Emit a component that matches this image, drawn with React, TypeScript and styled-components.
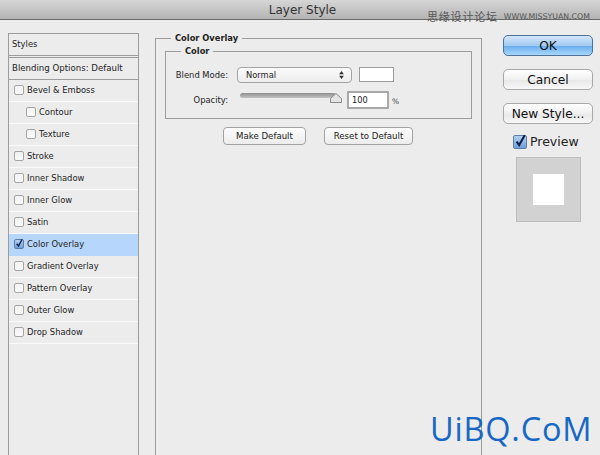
import React from "react"
import styled, { createGlobalStyle } from "styled-components"

const GlobalStyle = createGlobalStyle`
    html, body {
        margin: 0;
        padding: 0;
        background: #ececec;
    }
    * {
        box-sizing: border-box;
    }
`;

const effects = [
    { label: "Bevel & Emboss" },
    { label: "Contour", nested: true },
    { label: "Texture", nested: true },
    { label: "Stroke" },
    { label: "Inner Shadow" },
    { label: "Inner Glow" },
    { label: "Satin" },
    { label: "Color Overlay", checked: true },
    { label: "Gradient Overlay" },
    { label: "Pattern Overlay" },
    { label: "Outer Glow" },
    { label: "Drop Shadow" },
];

const Check = ({ checked, large }: { checked?: boolean; large?: boolean }) => (
    <CheckBox $checked={checked} $large={large}>
        {checked && (
            <CheckMark viewBox="0 0 14 14">
                <path d="M3 6.5 L6 10.5 L12.5 -1" fill="none" stroke="#10204a" strokeWidth="2.4" />
            </CheckMark>
        )}
    </CheckBox>
);

export default function App() {
    return (
        <Window>
            <GlobalStyle />
            <TitleBar>
                <Title>Layer Style</Title>
                <Watermark>
                    <WatermarkCn>思缘设计论坛</WatermarkCn>
                    <WatermarkUrl>WWW.MISSYUAN.COM</WatermarkUrl>
                </Watermark>
            </TitleBar>
            <Body>
                <Sidebar>
                    <SidebarHead>Styles</SidebarHead>
                    <SidebarOptions>Blending Options: Default</SidebarOptions>
                    {effects.map((effect) => (
                        <EffectRow key={effect.label} $active={effect.checked} $nested={effect.nested}>
                            <Check checked={effect.checked} />
                            {effect.label}
                        </EffectRow>
                    ))}
                </Sidebar>
                <MainGroup>
                    <MainLegend>Color Overlay</MainLegend>
                    <ColorGroup>
                        <ColorLegend>Color</ColorLegend>
                        <FieldRow>
                            <FieldLabel>Blend Mode:</FieldLabel>
                            <Select>
                                Normal
                                <svg width="5" height="8" viewBox="0 0 6 10">
                                    <path d="M3 0 L6 4 H0 Z M0 6 H6 L3 10 Z" fill="#333" />
                                </svg>
                            </Select>
                            <Swatch />
                        </FieldRow>
                        <OpacityRow>
                            <FieldLabel>Opacity:</FieldLabel>
                            <Slider>
                                <SliderThumb viewBox="0 0 12 10" width="12" height="10">
                                    <path d="M6 .5 L11.5 5.5 V9.5 H.5 V5.5 Z" fill="#e4e4e4" stroke="#8a8a8a" />
                                </SliderThumb>
                            </Slider>
                            <NumberBox>100</NumberBox>
                            <Percent>%</Percent>
                        </OpacityRow>
                    </ColorGroup>
                    <DefaultsRow>
                        <SmallButton $width={83}>Make Default</SmallButton>
                        <SmallButton $width={89}>Reset to Default</SmallButton>
                    </DefaultsRow>
                </MainGroup>
                <Actions>
                    <ActionButton $primary>OK</ActionButton>
                    <ActionButton>Cancel</ActionButton>
                    <ActionButton>New Style...</ActionButton>
                    <PreviewToggle>
                        <Check checked large />
                        Preview
                    </PreviewToggle>
                    <PreviewBox>
                        <PreviewInner />
                    </PreviewBox>
                </Actions>
            </Body>
            <Brand>UiBQ.CoM</Brand>
        </Window>
    );
}

const Window = styled.div`
    position: relative;
    width: 600px;
    height: 455px;
    overflow: hidden;
    background: #ececec;
    font-family: "DejaVu Sans", sans-serif;
    color: #222;
`;

const TitleBar = styled.div`
    position: relative;
    height: 20px;
    display: flex;
    align-items: center;
    justify-content: center;
    background: linear-gradient(#d6d6d6, #b4b4b4);
    border-bottom: 1px solid #6a6a6a;
`;

const Title = styled.div`
    margin-left: 5px;
    font-size: 12px;
    color: #333;
`;

const Watermark = styled.div`
    position: absolute;
    left: 427px;
    top: 8px;
    display: flex;
    align-items: center;
    gap: 6px;
    height: 16px;
    color: #555;
`;

const WatermarkCn = styled.span`
    font-family: "Noto Sans CJK SC", sans-serif;
    font-size: 11px;
    letter-spacing: .8px;
`;

const WatermarkUrl = styled.span`
    margin-top: 1px;
    font-size: 7.8px;
`;

const Body = styled.div`
    display: flex;
    align-items: flex-start;
    padding: 13px 7px 0 8px;
`;

const Sidebar = styled.div`
    flex: none;
    width: 131px;
    height: 430px;
    border: 1px solid #9c9c9c;
    border-bottom: none;
`;

const SidebarHead = styled.div`
    height: 24px;
    display: flex;
    align-items: center;
    padding: 0 0 1px 3px;
    font-size: 8.4px;
    border-bottom: 3px double #9c9c9c;
`;

const SidebarOptions = styled(SidebarHead)`
    height: 22px;
    font-size: 8.6px;
    border-bottom: 1px solid #9c9c9c;
`;

const EffectRow = styled.div<{ $active?: boolean; $nested?: boolean }>`
    height: 22px;
    display: flex;
    align-items: center;
    gap: 3px;
    padding: 0 0 1px ${(p) => (p.$nested ? 17 : 5)}px;
    font-size: 8.4px;
    background: ${(p) => (p.$active ? "#b6d6fb" : "transparent")};
    border-bottom: 1px solid ${(p) => (p.$active ? "#b6d6fb" : "#fafafa")};
`;

const CheckBox = styled.span<{ $checked?: boolean; $large?: boolean }>`
    flex: none;
    width: ${(p) => (p.$large ? 14 : 10)}px;
    height: ${(p) => (p.$large ? 14 : 10)}px;
    border: 1px solid ${(p) => (p.$checked ? "#5f7ea6" : "#a5a5a5")};
    border-radius: 2px;
    background: ${(p) => (p.$checked ? "linear-gradient(#b5d1f0, #6f9fd8)" : "linear-gradient(#f2f2f2, #fbfbfb)")};
`;

const CheckMark = styled.svg`
    display: block;
    width: 100%;
    height: 100%;
    overflow: visible;
`;

const MainGroup = styled.fieldset`
    flex: none;
    width: 327px;
    height: 460px;
    margin: -1px 0 0 16px;
    padding: 0 9px;
    border: 1px solid #9c9c9c;
    border-bottom: none;
    min-inline-size: 0;
`;

const MainLegend = styled.legend`
    margin-left: 6px;
    padding: 1px 4px 0;
    font-size: 8.3px;
    font-weight: bold;
    line-height: 11px;
`;

const ColorGroup = styled.fieldset`
    height: 74px;
    margin: 1px 0 0;
    padding: 0;
    border: 1px solid #9c9c9c;
    min-inline-size: 0;
`;

const ColorLegend = styled(MainLegend)`
    margin-left: 15px;
`;

const FieldRow = styled.div`
    display: flex;
    align-items: center;
    height: 17px;
    margin-top: 9px;
`;

const OpacityRow = styled(FieldRow)`
    position: relative;
    height: 18px;
    margin-top: 8px;
`;

const FieldLabel = styled.div`
    flex: none;
    width: 62px;
    text-align: right;
    font-size: 8.4px;
`;

const Select = styled.div`
    flex: none;
    width: 115px;
    height: 16px;
    margin-left: 9px;
    padding: 0 7px 0 8px;
    display: flex;
    align-items: center;
    justify-content: space-between;
    font-size: 8.3px;
    border: 1px solid #a2a2a2;
    border-radius: 4px;
    background: linear-gradient(#fbfbfb, #ededed);
`;

const Swatch = styled.div`
    flex: none;
    width: 35px;
    height: 15px;
    margin-left: 7px;
    background: #fff;
    border: 1px solid #9c9c9c;
`;

const Slider = styled.div`
    position: relative;
    flex: none;
    width: 96px;
    height: 5px;
    margin: -9px 0 0 12px;
    border-radius: 3px;
    background: linear-gradient(#8e8e8e, #c2c2c2);
`;

const SliderThumb = styled.svg`
    position: absolute;
    right: -6px;
    top: 0;
`;

const NumberBox = styled.div`
    flex: none;
    width: 42px;
    height: 18px;
    margin-left: 11px;
    padding-left: 3px;
    display: flex;
    align-items: center;
    font-size: 8.2px;
    background: #fff;
    border: 2px solid #a8a8a8;
`;

const Percent = styled.span`
    margin: 2px 0 0 3px;
    font-size: 7.5px;
    color: #444;
`;

const DefaultsRow = styled.div`
    display: flex;
    gap: 18px;
    margin: 8px 0 0 58px;
`;

const SmallButton = styled.div<{ $width: number }>`
    width: ${(p) => p.$width}px;
    height: 18px;
    display: flex;
    align-items: center;
    justify-content: center;
    white-space: nowrap;
    font-size: 8.6px;
    border: 1px solid #a2a2a2;
    border-radius: 4px;
    background: linear-gradient(#fdfdfd, #ececec);
`;

const Actions = styled.div`
    flex: none;
    width: 90px;
    margin: 2px 0 0 21px;
    display: flex;
    flex-direction: column;
    align-items: center;
`;

const ActionButton = styled.div<{ $primary?: boolean }>`
    width: 90px;
    height: 21px;
    margin-bottom: 13px;
    display: flex;
    align-items: center;
    justify-content: center;
    white-space: nowrap;
    font-size: 12.2px;
    color: #111;
    border: 1px solid ${(p) => (p.$primary ? "#4d7197" : "#a8a8a8")};
    border-radius: 5px;
    background: ${(p) =>
        p.$primary
            ? "linear-gradient(#d4e6f9, #a3cbf3 50%, #6cb0f0 55%, #a9d8fb)"
            : "linear-gradient(#ffffff, #f0f0f0 50%, #e8e8e8 55%, #f8f8f8)"};
`;

const PreviewToggle = styled.div`
    align-self: flex-start;
    display: flex;
    align-items: center;
    gap: 3px;
    margin: -3px 0 8px 10px;
    font-size: 12.5px;
    color: #222;
    white-space: nowrap;
`;

const PreviewBox = styled.div`
    width: 65px;
    height: 65px;
    display: flex;
    align-items: center;
    justify-content: center;
    background: #d2d2d2;
    border: 1px solid #bdbdbd;
`;

const PreviewInner = styled.div`
    width: 31px;
    height: 31px;
    background: #fff;
`;

const Brand = styled.div`
    position: absolute;
    left: 430px;
    top: 409px;
    font-family: "Open Sans", sans-serif;
    font-size: 32.5px;
    letter-spacing: .8px;
    line-height: 40px;
    color: #1768c4;
`;
